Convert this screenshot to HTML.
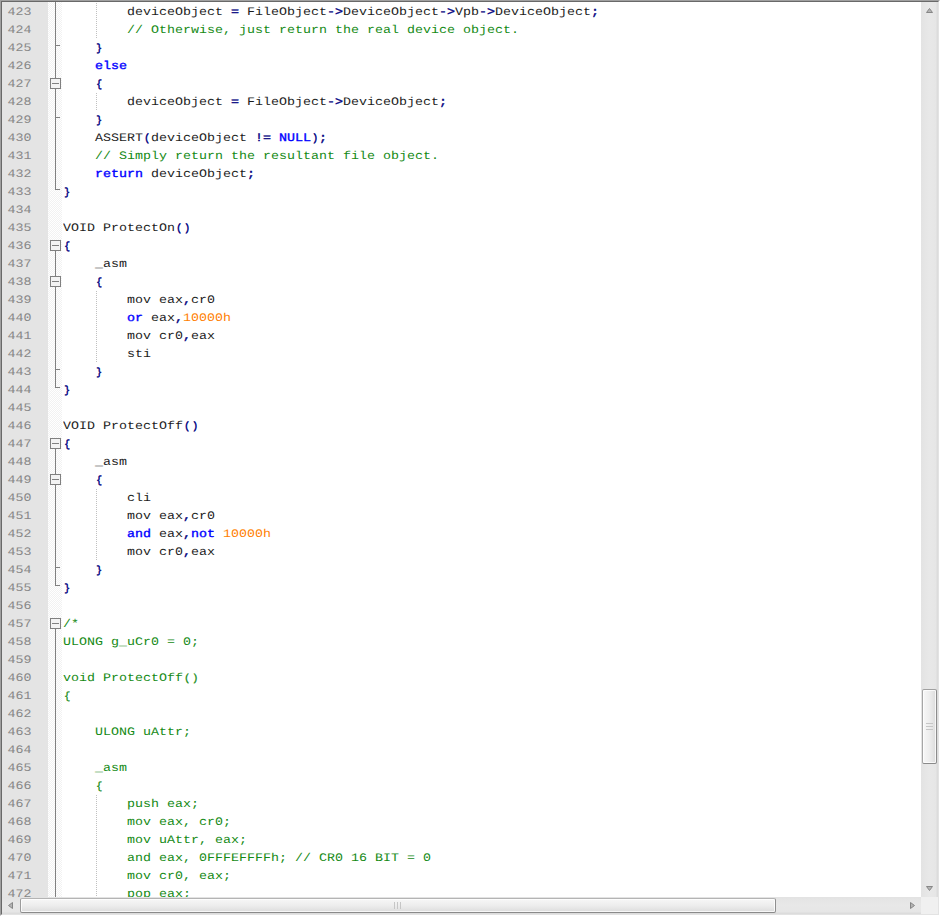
<!DOCTYPE html>
<html><head><meta charset="utf-8"><title>editor</title>
<style>
html,body{margin:0;padding:0;background:#fff;}
body{width:940px;height:916px;overflow:hidden;position:relative;font-family:"Liberation Mono","DejaVu Sans Mono",monospace;font-size:13.333px;text-rendering:geometricPrecision;}
#frame{position:absolute;left:0;top:0;width:936px;height:912px;border-style:solid;border-width:2px;border-color:#696969 #e3e3e3 #e3e3e3 #696969;overflow:hidden;}
#ob{position:absolute;left:0;top:0;width:939px;height:915px;border-style:solid;border-width:1px 1px 1px 1px;border-color:#a0a0a0 #fff #fff #a0a0a0;box-sizing:content-box;width:938px;height:914px;pointer-events:none;}
#ed{position:absolute;left:2px;top:2px;width:919px;height:895px;overflow:hidden;background:#fff;}
#num{position:absolute;left:0;top:0;width:46px;height:895px;background:#e4e4e4;}
#fm{position:absolute;left:46px;top:0;width:14px;height:895px;background:repeating-conic-gradient(#f2f2f2 0% 25%,#ffffff 0% 50%) 0 0/2px 2px;}
.r{position:absolute;left:0;width:919px;height:18px;line-height:18px;white-space:pre;}
.ln{position:absolute;left:5.4px;top:2px;color:#878787;transform:scaleY(0.86);transform-origin:0 13px;}
.tx{position:absolute;left:61px;top:2px;color:#1c1c1c;transform:scaleY(0.86);transform-origin:0 13px;}
.k{color:#0000ff;-webkit-text-stroke:0.4px #0000ff;}
.o{color:#000080;-webkit-text-stroke:0.4px #000080;}
.c{color:#148a14;}
.n{color:#ff8000;}
.o .b{-webkit-text-stroke:0.65px #000080;}
.c .b{transform:scale(0.8,0.9);-webkit-text-stroke:0.35px #148a14;}
.b{display:inline-block;width:8px;transform:scale(0.72,0.9);transform-origin:4.4px 6px;}
.g{position:absolute;top:0;width:1px;height:18px;background:repeating-linear-gradient(to bottom,#fff 0 1px,#c0c0c0 1px 2px);}
.fl{position:absolute;left:53px;width:1px;background:#808080;}
.fh{position:absolute;left:53px;width:5px;height:1px;background:#808080;}
.fb{position:absolute;left:48px;width:9px;height:9px;border:1px solid #808080;background:#f3f3f3;}
.fb i{position:absolute;left:1px;top:4px;width:7px;height:1px;background:#808080;}
#vs{position:absolute;left:921px;top:2px;width:17px;height:895px;background:linear-gradient(to right,#e3e3e3 0,#e8e8e8 8px,#e6e6e6 15px,#dcdcdc 16px,#dcdcdc 17px);}
#hs{position:absolute;left:2px;top:897px;width:919px;height:17px;background:linear-gradient(to bottom,#e3e3e3 0,#e8e8e8 8px,#e6e6e6 15px,#dcdcdc 16px,#dcdcdc 17px);}
#co{position:absolute;left:921px;top:897px;width:17px;height:17px;background:#f0f0f0;}
#vt{position:absolute;left:1px;top:687px;width:13px;height:73px;border:1px solid #979797;border-color:#a0a0a0 #8c8c8c #8a8a8a #a6a6a6;border-radius:2px;background:linear-gradient(to right,#f7f7f7 0,#ededed 50%,#dcdcdc 100%);box-shadow:inset 0 0 0 1px rgba(255,255,255,.75);}
#ht{position:absolute;left:18px;top:1px;width:754px;height:13px;border:1px solid #979797;border-color:#b4b4b4 #8f8f8f #8a8a8a #9c9c9c;border-radius:2px;background:linear-gradient(to bottom,#f7f7f7 0,#ededed 50%,#dcdcdc 100%);box-shadow:inset 0 0 0 1px rgba(255,255,255,.75);}
.gv{position:absolute;left:3px;width:7px;height:1px;background:#c6c6c6;}
.gh{position:absolute;top:3px;width:1px;height:7px;background:#c6c6c6;}
svg{position:absolute;display:block;}
</style></head><body>
<div id="frame"></div><div id="ob"></div>
<div id="ed"><div id="num"></div><div id="fm"></div>
<div class="r" style="top:0px"><span class="ln">423</span><b class="g" style="left:94px"></b><b class="fl" style="top:0;height:18px"></b><span class="tx">        deviceObject <span class="o">=</span> FileObject<span class="o">-&gt;</span>DeviceObject<span class="o">-&gt;</span>Vpb<span class="o">-&gt;</span>DeviceObject<span class="o">;</span></span></div>
<div class="r" style="top:18px"><span class="ln">424</span><b class="g" style="left:94px"></b><b class="fl" style="top:0;height:18px"></b><span class="tx">        <span class="c">// Otherwise, just return the real device object.</span></span></div>
<div class="r" style="top:36px"><span class="ln">425</span><b class="fl" style="top:0;height:18px"></b><b class="fh" style="top:7px"></b><span class="tx">    <span class="o"><span class="b">}</span></span></span></div>
<div class="r" style="top:54px"><span class="ln">426</span><b class="fl" style="top:0;height:18px"></b><span class="tx">    <span class="k">else</span></span></div>
<div class="r" style="top:72px"><span class="ln">427</span><b class="fl" style="top:0;height:18px"></b><b class="fb" style="top:4px"><i></i></b><span class="tx">    <span class="o"><span class="b">{</span></span></span></div>
<div class="r" style="top:90px"><span class="ln">428</span><b class="g" style="left:94px"></b><b class="fl" style="top:0;height:18px"></b><span class="tx">        deviceObject <span class="o">=</span> FileObject<span class="o">-&gt;</span>DeviceObject<span class="o">;</span></span></div>
<div class="r" style="top:108px"><span class="ln">429</span><b class="fl" style="top:0;height:18px"></b><b class="fh" style="top:7px"></b><span class="tx">    <span class="o"><span class="b">}</span></span></span></div>
<div class="r" style="top:126px"><span class="ln">430</span><b class="fl" style="top:0;height:18px"></b><span class="tx">    ASSERT<span class="o"><span class="b">(</span></span>deviceObject <span class="o">!=</span> <span class="k">NULL</span><span class="o"><span class="b">)</span>;</span></span></div>
<div class="r" style="top:144px"><span class="ln">431</span><b class="fl" style="top:0;height:18px"></b><span class="tx">    <span class="c">// Simply return the resultant file object.</span></span></div>
<div class="r" style="top:162px"><span class="ln">432</span><b class="fl" style="top:0;height:18px"></b><span class="tx">    <span class="k">return</span> deviceObject<span class="o">;</span></span></div>
<div class="r" style="top:180px"><span class="ln">433</span><b class="fl" style="top:0;height:8px"></b><b class="fh" style="top:7px"></b><span class="tx"><span class="o"><span class="b">}</span></span></span></div>
<div class="r" style="top:198px"><span class="ln">434</span></div>
<div class="r" style="top:216px"><span class="ln">435</span><span class="tx">VOID ProtectOn<span class="o"><span class="b">(</span><span class="b">)</span></span></span></div>
<div class="r" style="top:234px"><span class="ln">436</span><b class="fl" style="top:9px;height:9px"></b><b class="fb" style="top:4px"><i></i></b><span class="tx"><span class="o"><span class="b">{</span></span></span></div>
<div class="r" style="top:252px"><span class="ln">437</span><b class="fl" style="top:0;height:18px"></b><span class="tx">    _asm</span></div>
<div class="r" style="top:270px"><span class="ln">438</span><b class="fl" style="top:0;height:18px"></b><b class="fb" style="top:4px"><i></i></b><span class="tx">    <span class="o"><span class="b">{</span></span></span></div>
<div class="r" style="top:288px"><span class="ln">439</span><b class="g" style="left:94px"></b><b class="fl" style="top:0;height:18px"></b><span class="tx">        mov eax<span class="o">,</span>cr0</span></div>
<div class="r" style="top:306px"><span class="ln">440</span><b class="g" style="left:94px"></b><b class="fl" style="top:0;height:18px"></b><span class="tx">        <span class="k">or</span> eax<span class="o">,</span><span class="n">10000h</span></span></div>
<div class="r" style="top:324px"><span class="ln">441</span><b class="g" style="left:94px"></b><b class="fl" style="top:0;height:18px"></b><span class="tx">        mov cr0<span class="o">,</span>eax</span></div>
<div class="r" style="top:342px"><span class="ln">442</span><b class="g" style="left:94px"></b><b class="fl" style="top:0;height:18px"></b><span class="tx">        sti</span></div>
<div class="r" style="top:360px"><span class="ln">443</span><b class="fl" style="top:0;height:18px"></b><b class="fh" style="top:7px"></b><span class="tx">    <span class="o"><span class="b">}</span></span></span></div>
<div class="r" style="top:378px"><span class="ln">444</span><b class="fl" style="top:0;height:8px"></b><b class="fh" style="top:7px"></b><span class="tx"><span class="o"><span class="b">}</span></span></span></div>
<div class="r" style="top:396px"><span class="ln">445</span></div>
<div class="r" style="top:414px"><span class="ln">446</span><span class="tx">VOID ProtectOff<span class="o"><span class="b">(</span><span class="b">)</span></span></span></div>
<div class="r" style="top:432px"><span class="ln">447</span><b class="fl" style="top:9px;height:9px"></b><b class="fb" style="top:4px"><i></i></b><span class="tx"><span class="o"><span class="b">{</span></span></span></div>
<div class="r" style="top:450px"><span class="ln">448</span><b class="fl" style="top:0;height:18px"></b><span class="tx">    _asm</span></div>
<div class="r" style="top:468px"><span class="ln">449</span><b class="fl" style="top:0;height:18px"></b><b class="fb" style="top:4px"><i></i></b><span class="tx">    <span class="o"><span class="b">{</span></span></span></div>
<div class="r" style="top:486px"><span class="ln">450</span><b class="g" style="left:94px"></b><b class="fl" style="top:0;height:18px"></b><span class="tx">        cli</span></div>
<div class="r" style="top:504px"><span class="ln">451</span><b class="g" style="left:94px"></b><b class="fl" style="top:0;height:18px"></b><span class="tx">        mov eax<span class="o">,</span>cr0</span></div>
<div class="r" style="top:522px"><span class="ln">452</span><b class="g" style="left:94px"></b><b class="fl" style="top:0;height:18px"></b><span class="tx">        <span class="k">and</span> eax<span class="o">,</span><span class="k">not</span> <span class="n">10000h</span></span></div>
<div class="r" style="top:540px"><span class="ln">453</span><b class="g" style="left:94px"></b><b class="fl" style="top:0;height:18px"></b><span class="tx">        mov cr0<span class="o">,</span>eax</span></div>
<div class="r" style="top:558px"><span class="ln">454</span><b class="fl" style="top:0;height:18px"></b><b class="fh" style="top:7px"></b><span class="tx">    <span class="o"><span class="b">}</span></span></span></div>
<div class="r" style="top:576px"><span class="ln">455</span><b class="fl" style="top:0;height:8px"></b><b class="fh" style="top:7px"></b><span class="tx"><span class="o"><span class="b">}</span></span></span></div>
<div class="r" style="top:594px"><span class="ln">456</span></div>
<div class="r" style="top:612px"><span class="ln">457</span><b class="fl" style="top:9px;height:9px"></b><b class="fb" style="top:4px"><i></i></b><span class="tx"><span class="c">/*</span></span></div>
<div class="r" style="top:630px"><span class="ln">458</span><b class="fl" style="top:0;height:18px"></b><span class="tx"><span class="c">ULONG g_uCr0 = 0;</span></span></div>
<div class="r" style="top:648px"><span class="ln">459</span><b class="fl" style="top:0;height:18px"></b></div>
<div class="r" style="top:666px"><span class="ln">460</span><b class="fl" style="top:0;height:18px"></b><span class="tx"><span class="c">void ProtectOff<span class="b">(</span><span class="b">)</span></span></span></div>
<div class="r" style="top:684px"><span class="ln">461</span><b class="fl" style="top:0;height:18px"></b><span class="tx"><span class="c"><span class="b">{</span></span></span></div>
<div class="r" style="top:702px"><span class="ln">462</span><b class="fl" style="top:0;height:18px"></b></div>
<div class="r" style="top:720px"><span class="ln">463</span><b class="fl" style="top:0;height:18px"></b><span class="tx">    <span class="c">ULONG uAttr;</span></span></div>
<div class="r" style="top:738px"><span class="ln">464</span><b class="fl" style="top:0;height:18px"></b></div>
<div class="r" style="top:756px"><span class="ln">465</span><b class="fl" style="top:0;height:18px"></b><span class="tx">    <span class="c">_asm</span></span></div>
<div class="r" style="top:774px"><span class="ln">466</span><b class="fl" style="top:0;height:18px"></b><span class="tx">    <span class="c"><span class="b">{</span></span></span></div>
<div class="r" style="top:792px"><span class="ln">467</span><b class="g" style="left:94px"></b><b class="fl" style="top:0;height:18px"></b><span class="tx">        <span class="c">push eax;</span></span></div>
<div class="r" style="top:810px"><span class="ln">468</span><b class="g" style="left:94px"></b><b class="fl" style="top:0;height:18px"></b><span class="tx">        <span class="c">mov eax, cr0;</span></span></div>
<div class="r" style="top:828px"><span class="ln">469</span><b class="g" style="left:94px"></b><b class="fl" style="top:0;height:18px"></b><span class="tx">        <span class="c">mov uAttr, eax;</span></span></div>
<div class="r" style="top:846px"><span class="ln">470</span><b class="g" style="left:94px"></b><b class="fl" style="top:0;height:18px"></b><span class="tx">        <span class="c">and eax, 0FFFEFFFFh; // CR0 16 BIT = 0</span></span></div>
<div class="r" style="top:864px"><span class="ln">471</span><b class="g" style="left:94px"></b><b class="fl" style="top:0;height:18px"></b><span class="tx">        <span class="c">mov cr0, eax;</span></span></div>
<div class="r" style="top:882px"><span class="ln">472</span><b class="g" style="left:94px"></b><b class="fl" style="top:0;height:18px"></b><span class="tx">        <span class="c">pop eax;</span></span></div>
</div>
<div id="vs"><svg style="left:5px;top:6px" width="7" height="5" viewBox="0 0 7 5"><path d="M3.5 0.5 L6.5 4.5 L0.5 4.5 Z" fill="#b4b4b4" stroke="#868686" stroke-width="1"/></svg>
<div id="vt"><b class="gv" style="top:33px"></b><b class="gv" style="top:36px"></b><b class="gv" style="top:39px"></b></div>
<svg style="left:5px;top:884px" width="7" height="5" viewBox="0 0 7 5"><path d="M0.5 0.5 L6.5 0.5 L3.5 4.5 Z" fill="#b4b4b4" stroke="#868686" stroke-width="1"/></svg></div>
<div id="hs"><svg style="left:6px;top:5px" width="5" height="7" viewBox="0 0 5 7"><path d="M0.5 3.5 L4.5 0.5 L4.5 6.5 Z" fill="#b4b4b4" stroke="#868686" stroke-width="1"/></svg>
<div id="ht"><b class="gh" style="left:373px"></b><b class="gh" style="left:376px"></b><b class="gh" style="left:379px"></b></div>
<svg style="left:908px;top:5px" width="5" height="7" viewBox="0 0 5 7"><path d="M0.5 0.5 L4.5 3.5 L0.5 6.5 Z" fill="#b4b4b4" stroke="#868686" stroke-width="1"/></svg></div>
<div id="co"></div>
</body></html>
